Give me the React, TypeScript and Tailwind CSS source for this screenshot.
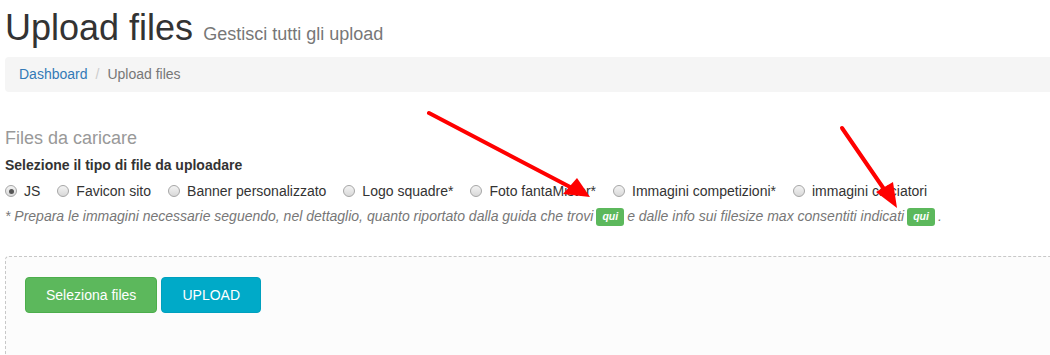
const TYPES = [
  { label: 'JS', checked: true },
  { label: 'Favicon sito' },
  { label: 'Banner personalizzato' },
  { label: 'Logo squadre*' },
  { label: 'Foto fantaMister*' },
  { label: 'Immagini competizioni*' },
  { label: 'immagini calciatori' },
]

function Radio({ checked }: { checked?: boolean }) {
  return (
    <span className="relative inline-flex items-center justify-center w-[12px] h-[12px] rounded-full border border-[#a6a6a6] bg-gradient-to-b from-[#f3f3f3] to-[#d9d9d9] mr-[7px] shrink-0">
      {checked && <span className="w-[5px] h-[5px] rounded-full bg-[#555]" />}
    </span>
  )
}

function Badge() {
  return (
    <span className="inline-block bg-[#5cb85c] text-white font-bold italic text-[10.5px] leading-none px-[6px] pt-[3px] pb-[4px] rounded-[3px] mx-[3px] align-[1px]">
      qui
    </span>
  )
}

export default function App() {
  return (
    <div className="relative w-[1050px] h-[355px] overflow-hidden bg-white text-[#333] font-['Liberation_Sans',Arial,sans-serif] text-[14px]">
      <div className="pl-[5px]">
        {/* Header */}
        <h1 className="pt-[8px] text-[36px] leading-[40px] font-normal">
          Upload files{' '}
          <small className="text-[18px] text-[#777]">Gestisci tutti gli upload</small>
        </h1>

        {/* Breadcrumb */}
        <div className="mt-[3px] w-[1100px] h-[35px] bg-[#f5f5f5] rounded-l-[4px] px-[14px] flex items-center">
          <span className="text-[#337ab7]">Dashboard</span>
          <span className="text-[#ccc] px-[8px]">/</span>
          <span className="text-[#777]">Upload files</span>
        </div>

        {/* Files */}
        <h3 className="mt-[36px] text-[18px] leading-[20px] text-[#999]">Files da caricare</h3>
        <div className="mt-[7px] font-bold leading-[20px]">Selezione il tipo di file da uploadare</div>
        <div className="mt-[6px] flex items-center leading-[20px]">
          {TYPES.map((t) => (
            <label key={t.label} className="flex items-center mr-[17px]">
              <Radio checked={t.checked} />
              {t.label}
            </label>
          ))}
        </div>
        <p className="mt-[5px] italic text-[#777] leading-[20px]">
          * Prepara le immagini necessarie seguendo, nel dettaglio, quanto riportato dalla guida che trovi
          <Badge />
          e dalle info sui filesize max consentiti indicati
          <Badge />.
        </p>

        {/* Dropzone */}
        <div className="mt-[30px] w-[1100px] h-[120px] border border-dashed border-[#c8c8c8] border-r-0 rounded-tl-[4px] bg-[#fcfcfc] pt-[20px] pl-[19px] flex items-start gap-[4px]">
          <button className="h-[36px] px-[20px] bg-[#5cb85c] border border-[#4cae4c] rounded-[4px] text-white text-[14px]">
            Seleziona files
          </button>
          <button className="h-[36px] w-[100px] bg-[#00aac8] border border-[#00a0be] rounded-[4px] text-white text-[14px]">
            UPLOAD
          </button>
        </div>
      </div>

      {/* annotation arrows */}
      <svg className="absolute inset-0 pointer-events-none" width="1050" height="355">
        <line x1="429" y1="113" x2="572" y2="188" stroke="#ff0000" strokeWidth="4" strokeLinecap="round" />
        <polygon points="590,197 563,194 577,178" fill="#ff0000" />
        <line x1="842" y1="128" x2="886" y2="192" stroke="#ff0000" strokeWidth="4" strokeLinecap="round" />
        <polygon points="897,208 876,192 893,182" fill="#ff0000" />
      </svg>
    </div>
  )
}
